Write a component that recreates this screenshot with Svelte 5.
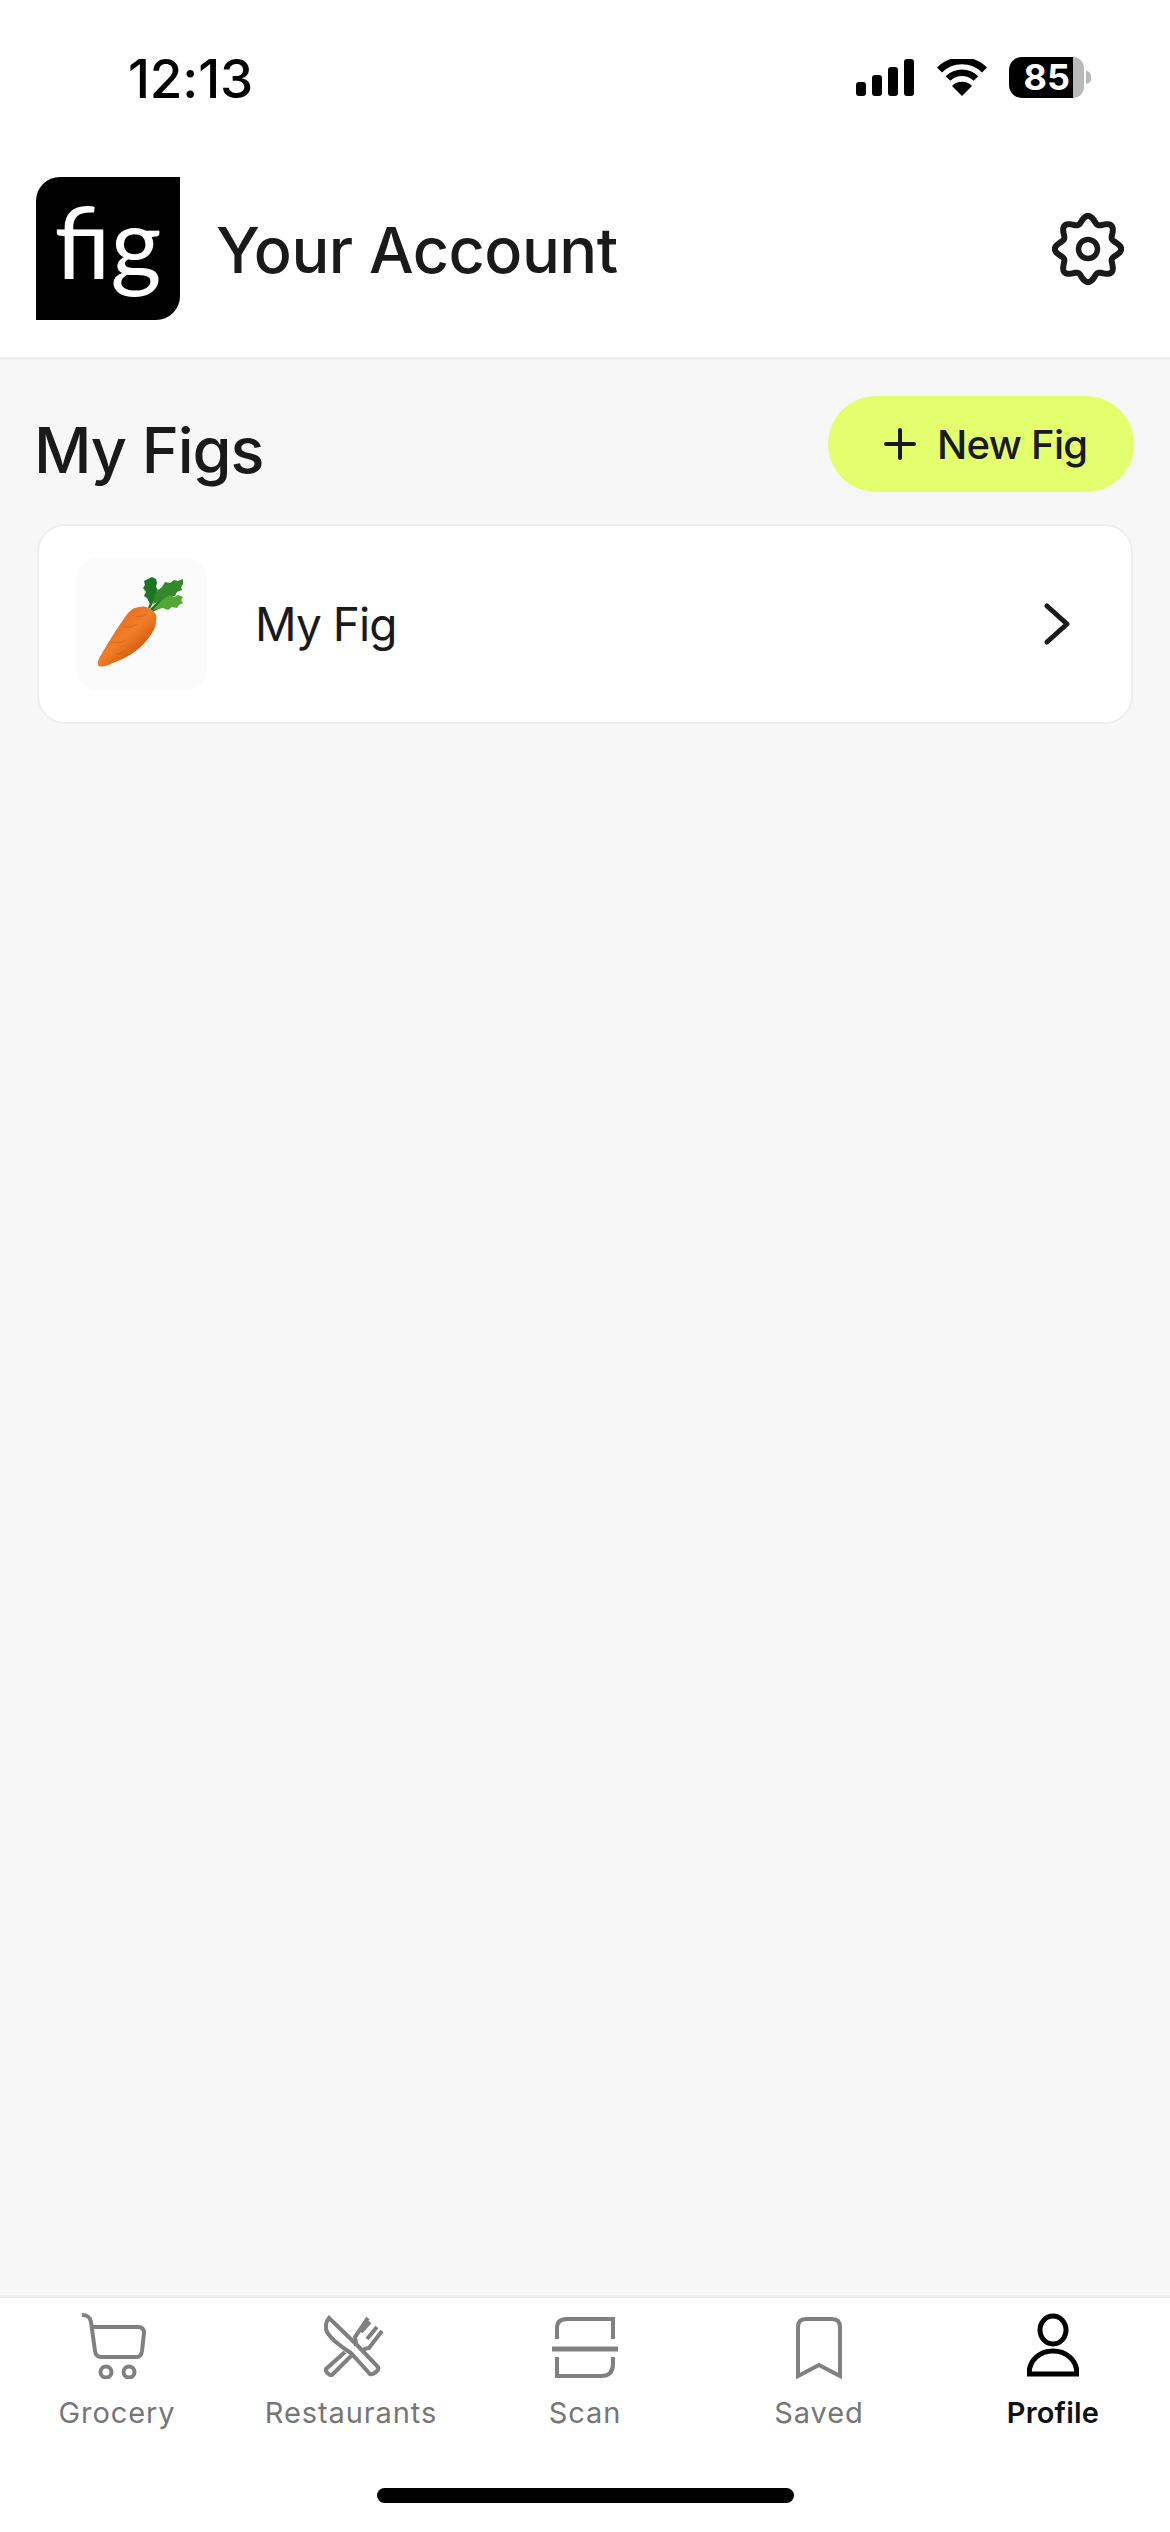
<script>
  const gearPts = [];
  for (let i = 0; i < 240; i++) {
    const t = (i / 240) * Math.PI * 2;
    const r = 29.5 + 3.6 * Math.cos(8 * t);
    gearPts.push(`${(36 + r * Math.cos(t)).toFixed(2)},${(36 + r * Math.sin(t)).toFixed(2)}`);
  }
  const gear = 'M' + gearPts.join('L') + 'Z';
</script>

<div class="phone">
  <div class="status">
    <span class="time">12:13</span>
    <div class="status-icons">
      <svg class="signal" width="58" height="37" viewBox="0 0 58 37" aria-hidden="true">
        <rect x="0" y="23" width="10" height="14" rx="3"/>
        <rect x="16" y="16" width="10" height="21" rx="3"/>
        <rect x="32" y="8" width="10" height="29" rx="3"/>
        <rect x="48" y="0" width="10" height="37" rx="3"/>
      </svg>
      <svg class="wifi" width="50" height="37" viewBox="0 0 50 37" aria-hidden="true">
        <path d="M25 37 L15 27 A14 14 0 0 1 35 27 Z" fill="#000"/>
        <path d="M11 19.5 A20 20 0 0 1 39 19.5" fill="none" stroke="#000" stroke-width="6.5"/>
        <path d="M2.5 11 A32 32 0 0 1 47.5 11" fill="none" stroke="#000" stroke-width="7"/>
      </svg>
      <div class="battery">
        <div class="battery-body">
          <span class="battery-fill">85</span>
          <span class="battery-rest"></span>
        </div>
        <span class="battery-nub"></span>
      </div>
    </div>
  </div>

  <header class="header">
    <div class="logo"><span>fig</span></div>
    <h1>Your Account</h1>
    <svg class="gear" width="72" height="72" viewBox="0 0 72 72" aria-hidden="true">
      <path d={gear} fill="none" stroke="#1a1a1a" stroke-width="6"/>
      <circle cx="36" cy="36" r="9.5" fill="none" stroke="#1a1a1a" stroke-width="5.5"/>
    </svg>
  </header>

  <main class="main">
    <div class="title-row">
      <h2>My Figs</h2>
      <button class="new-fig">
        <svg width="32" height="32" viewBox="0 0 32 32" aria-hidden="true">
          <path d="M2 16H30M16 2V30" stroke="#1a1a1a" stroke-width="4" stroke-linecap="round"/>
        </svg>
        <span>New Fig</span>
      </button>
    </div>

    <div class="card">
      <div class="thumb">
        <svg width="130" height="132" viewBox="0 0 130 132" aria-hidden="true">
          <defs>
            <linearGradient id="carrot" x1="0.25" y1="0.3" x2="0.7" y2="0.8">
              <stop offset="0" stop-color="#ea701f"/>
              <stop offset="0.45" stop-color="#f07e28"/>
              <stop offset="1" stop-color="#d4570f"/>
            </linearGradient>
          </defs>
          <path d="M72 50 L80 34 M74 52 L88 38 M75 53 L92 44" stroke="#2a6f1e" stroke-width="2.5" fill="none"/>
          <path d="M73 46 L70 40 L67 38 L69 34 L66 30 L68 27 L67 23 L71 21 L75 19 L79 21 L80 25 L79 29 L81 32 L78 36 L77 42Z" fill="#1c7424"/>
          <path d="M76 46 L78 37 L81 32 L85 29 L88 24 L93 25 L97 22 L101 23 L106 21 L106 26 L104 29 L105 32 L100 34 L98 38 L92 39 L86 42Z" fill="#33892a"/>
          <path d="M76 52 L82 45 L88 40 L92 37 L97 39 L101 37 L106 39 L104 42 L106 45 L102 47 L100 50 L95 49 L91 52 L86 50 L81 51Z" fill="#52a832"/>
          <path d="M21 107 Q20 103 24 97 C29 88 39 72 46 62 C50 56 54 51 58 50 Q68 46 75 52 Q81 57 79 62 C79 68 77 72 75 75 C70 83 65 88 60 92 C52 98 44 102 36 105 C30 108 23 110 21 107Z" fill="url(#carrot)"/>
          <path d="M34 84 Q42 86 49 82 M46 68 Q52 71 60 66 M38 96 Q44 96 48 93 M58 58 Q64 60 70 56" fill="none" stroke="#c9581a" stroke-width="1.2" opacity="0.45"/>
        </svg>
      </div>
      <span class="fig-name">My Fig</span>
      <svg class="chevron" width="28" height="44" viewBox="0 0 28 44" aria-hidden="true">
        <path d="M4 4 L24 22 L4 40" fill="none" stroke="#1a1a1a" stroke-width="5" stroke-linecap="round" stroke-linejoin="round"/>
      </svg>
    </div>
  </main>

  <nav class="tabbar">
    <div class="tabs">
      <div class="tab">
        <svg class="icon cart" width="64" height="66" viewBox="0 0 64 66" aria-hidden="true">
          <path d="M0 2 C6 2 8 4 9 9 L13 38 Q14 44 19 44 H55 Q59 44 60 38 L62 20 Q62 14 56 14 H10"/>
          <circle cx="24" cy="59" r="5.5"/>
          <circle cx="47" cy="59" r="5.5"/>
        </svg>
        <span>Grocery</span>
      </div>
      <div class="tab">
        <svg class="icon cutlery" width="60" height="62" viewBox="0 0 60 62" aria-hidden="true">
          <path d="M5 3 Q0 9 3 17 Q8 26 27 38 L46 59 Q49 60 53 56 Q55 54 54 52 L33 30 Z"/>
          <path d="M21 37 L2 54 Q1 57 6 60 L8 60 L28 40"/>
          <path d="M32 31 Q32 26 31 22 L44 3 M28 27 M37 36 Q42 33 45 33 L58 16 M37 17 L46 7 M43 24 L53 12"/>
        </svg>
        <span>Restaurants</span>
      </div>
      <div class="tab">
        <svg class="icon" width="66" height="62" viewBox="0 0 66 62" aria-hidden="true">
          <path d="M5 24 V13 Q5 4 15 4 H61 V24"/>
          <path d="M0 34 H66" stroke-width="5"/>
          <path d="M5 42 V61 H49 Q61 61 61 49 V42"/>
        </svg>
        <span>Scan</span>
      </div>
      <div class="tab">
        <svg class="icon" width="46" height="62" viewBox="0 0 46 62" aria-hidden="true">
          <path d="M2 61 V12 Q2 4 10 4 H36 Q44 4 44 12 V61 L23 50 Z"/>
        </svg>
        <span>Saved</span>
      </div>
      <div class="tab active">
        <svg class="icon" width="52" height="62" viewBox="0 0 52 62" aria-hidden="true">
          <ellipse cx="26" cy="15" rx="13" ry="14"/>
          <path d="M2 59 C2 44 14 36 26 36 C38 36 50 44 50 59 Z"/>
        </svg>
        <span>Profile</span>
      </div>
    </div>
    <div class="home"></div>
  </nav>
</div>

<style>
  :global(body) { margin: 0; }
  .phone {
    width: 1170px;
    height: 2532px;
    display: flex;
    flex-direction: column;
    background: #f7f7f7;
    font-family: Inter, "Liberation Sans", sans-serif;
    color: #1a1a1a;
    overflow: hidden;
  }
  .status {
    height: 177px;
    flex: none;
    background: #fff;
    display: flex;
    justify-content: space-between;
    align-items: flex-start;
    padding: 57px 79px 0 128px;
    box-sizing: border-box;
  }
  .time { font-size: 53px; font-weight: 500; line-height: 44px; color: #000; letter-spacing: -0.2px; }
  .status-icons { display: flex; align-items: flex-start; }
  .signal { margin-top: 2px; }
  .wifi { margin: 2px 0 0 23px; }
  .battery { display: flex; align-items: center; margin-left: 22px; }
  .battery-body {
    width: 75px;
    height: 41px;
    display: flex;
  }
  .battery-fill {
    width: 64px;
    flex: none;
    background: #000;
    color: #fff;
    border-radius: 13px 0 0 13px;
    font-size: 36px;
    font-weight: 700;
    line-height: 41px;
    text-align: right;
    padding-right: 3px;
    box-sizing: border-box;
  }
  .battery-rest { flex: 1; background: #b9b9b9; border-radius: 0 13px 13px 0; }
  .battery-nub {
    width: 5px;
    height: 13px;
    margin-left: 2px;
    background: #b9b9b9;
    border-radius: 0 6px 6px 0;
  }
  .header {
    flex: none;
    height: 183px;
    background: #fff;
    border-bottom: 3px solid #eeeeee;
    box-sizing: border-box;
    display: flex;
    align-items: flex-start;
    padding: 0 46px 0 36px;
  }
  .logo {
    width: 144px;
    height: 143px;
    background: #000;
    border-radius: 24px 0 24px 0;
    display: flex;
    justify-content: center;
    color: #fff;
    flex: none;
  }
  .logo span {
    font-family: Lato, sans-serif;
    font-size: 98px;
    line-height: 128px;
  }
  h1 {
    margin: 2px 0 0 36px;
    font-size: 63px;
    font-weight: 500;
    line-height: 143px;
    letter-spacing: -0.5px;
    flex: 1;
  }
  .gear { margin-top: 36px; }
  .main { flex: 1; padding: 36px 36px 0 37px; }
  .title-row {
    display: flex;
    justify-content: space-between;
    align-items: center;
    height: 96px;
  }
  h2 {
    margin: 12px 0 0 -3px;
    font-size: 63px;
    font-weight: 500;
    line-height: 84px;
    letter-spacing: -1.1px;
  }
  .new-fig {
    width: 306px;
    height: 96px;
    border: 0;
    border-radius: 48px;
    background: #e3ff6e;
    display: flex;
    align-items: center;
    gap: 21px;
    padding: 0 0 0 56px;
    box-sizing: border-box;
    color: #1a1a1a;
    font: 500 40px Inter, sans-serif;
    letter-spacing: -0.7px;
  }
  .new-fig svg { flex: none; }
  .card {
    margin-top: 32px;
    width: 1096px;
    height: 200px;
    box-sizing: border-box;
    background: #fff;
    border: 2px solid #eeeeee;
    border-radius: 28px;
    display: flex;
    align-items: center;
    padding: 0 60px 0 38px;
  }
  .thumb {
    width: 130px;
    height: 132px;
    background: #fbfbfb;
    border-radius: 20px;
    flex: none;
  }
  .fig-name { font-size: 46px; margin-left: 48px; flex: 1; letter-spacing: -0.9px; }
  .tabbar {
    flex: none;
    height: 237px;
    background: #fff;
    border-top: 3px solid #eeeeee;
    box-sizing: border-box;
    display: flex;
    flex-direction: column;
    align-items: center;
  }
  .tabs { display: grid; grid-template-columns: repeat(5, 234px); padding-top: 15px; }
  .tab {
    display: flex;
    flex-direction: column;
    align-items: center;
    font-size: 29px;
    line-height: 36px;
    color: #767676;
    height: 175px;
  }
  .icon { height: 66px; fill: none; stroke: #808080; stroke-width: 4; }
  .cart { transform: translateX(-3px); }
  .cutlery { transform: translateX(3px); }
  .tab span { margin-top: 16px; letter-spacing: 0.9px; }
  .active span { letter-spacing: 0.2px; }
  .active { color: #111; font-weight: 600; }
  .active .icon { stroke: #000; stroke-width: 5; }
  .home { width: 417px; height: 15px; border-radius: 8px; background: #000; }
</style>
